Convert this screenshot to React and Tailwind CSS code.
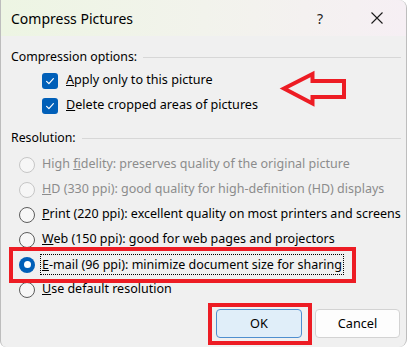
import React from 'react'

// Compress Pictures dialog (Windows 11 look) with red annotation marks

const font = { fontFamily: '"Segoe UI", "Noto Sans", "Liberation Sans", Arial, sans-serif' }

function Check() {
  return (
    <span className="flex h-4 w-4 shrink-0 items-center justify-center rounded-[3px] bg-[#005fb8]">
      <svg width="16" height="16" viewBox="0 0 16 16">
        <path d="M4.6 8.4 L6.9 10.6 L11.4 5.7" fill="none" stroke="#fff" strokeWidth="1.2" strokeLinecap="round" strokeLinejoin="round" />
      </svg>
    </span>
  )
}

function Radio({ state }) {
  if (state === 'on') {
    return (
      <span className="flex h-4 w-4 shrink-0 items-center justify-center rounded-full bg-[#005fb8]">
        <span className="h-[7px] w-[7px] rounded-full bg-white" />
      </span>
    )
  }
  if (state === 'disabled') {
    return <span className="h-4 w-4 shrink-0 rounded-full border border-[#c6c6c6] bg-[#f6f6f6]" />
  }
  return <span className="h-4 w-4 shrink-0 rounded-full border border-[#5c5c5c] bg-[#f7f7f7]" />
}

function Header({ label }) {
  return (
    <div className="flex h-[20px] items-center pl-[10px] pr-[5px]">
      <span className="text-[12.3px] text-black">{label}</span>
      <div className="ml-[6px] h-px flex-1 bg-[#d7d7d7]" />
    </div>
  )
}

const radios = [
  { key: 'High ', u: 'f', rest: 'idelity: preserves quality of the original picture', pre: true, state: 'disabled' },
  { u: 'H', rest: 'D (330 ppi): good quality for high-definition (HD) displays', state: 'disabled' },
  { u: 'P', rest: 'rint (220 ppi): excellent quality on most printers and screens', state: 'off' },
  { u: 'W', rest: 'eb (150 ppi): good for web pages and projectors', state: 'off' },
  { u: 'E', rest: '-mail (96 ppi): minimize document size for sharing', state: 'on' },
  { u: 'U', rest: 'se default resolution', state: 'off' },
]

export default function App() {
  return (
    <div className="h-[347px] w-[409px] overflow-hidden bg-white" style={font}>
      <div className="relative flex h-[347px] w-[407px] flex-col rounded-r-[8px] rounded-bl-[6px] border-l border-r border-[#bdbdbd] bg-[#f0f0f0]">
        {/* title bar */}
        <div className="flex h-[36px] items-center rounded-tr-[8px] bg-linear-to-r from-[#edf5e3] via-[#f2f3ec] to-[#f6eff4]">
          <span className="pl-[10px] text-[14px] text-black">Compress Pictures</span>
          <span className="ml-auto mr-[47px] text-[14px] text-[#222]">?</span>
          <svg width="14" height="14" viewBox="0 0 14 14" className="mr-[22px]">
            <path d="M1.5 1.5 L12.5 12.5 M12.5 1.5 L1.5 12.5" stroke="#1a1a1a" strokeWidth="1.1" />
          </svg>
        </div>

        <div className="pt-[11px]">
          <Header label="Compression options:" />
          <div className="mt-[1px] flex flex-col pl-[41px]">
            <label className="flex h-[25px] items-center gap-[8px] text-[12.6px] text-black">
              <Check />
              <span><u>A</u>pply only to this picture</span>
            </label>
            <label className="flex h-[25px] items-center gap-[8px] text-[12.6px] text-black">
              <Check />
              <span><u>D</u>elete cropped areas of pictures</span>
            </label>
          </div>

          <div className="mt-[10px]">
            <Header label="Resolution:" />
          </div>
          <div className="mt-[4px] flex flex-col pl-[18px]">
            {radios.map((r, i) => (
              <div key={i} className={`flex h-[25px] items-center gap-[7px] whitespace-nowrap text-[12.5px] ${r.state === 'disabled' ? 'text-[#8c8c8c]' : 'text-black'}`}>
                <Radio state={r.state} />
                {r.state === 'on' ? (
                  <span className="-ml-[2px] border border-dotted border-black px-[1px] leading-[19px]"><u>{r.u}</u>{r.rest}</span>
                ) : (
                  <span>{r.pre ? r.key : ''}<u>{r.u}</u>{r.rest}</span>
                )}
              </div>
            ))}
          </div>

          <div className="mt-[7px] flex justify-end gap-[13px] pr-[6px]">
            <button className="h-[29px] w-[86px] rounded-[4px] border border-[#4f8fcf] bg-[#e0eef9] text-[12.7px] text-black">OK</button>
            <button className="h-[29px] w-[85px] rounded-[4px] border border-[#d3d3d3] bg-[#fdfdfd] text-[12.7px] text-black">Cancel</button>
          </div>
        </div>

        {/* red annotations */}
        <svg className="pointer-events-none absolute left-[278px] top-[70px]" width="70" height="38" viewBox="0 0 70 38">
          <path d="M5 18.5 L33.5 4 L33.5 11 L65 11 L65 27 L33.5 27 L33.5 33.5 Z" fill="none" stroke="#ed1c24" strokeWidth="4" strokeLinejoin="miter" />
        </svg>
        <div className="pointer-events-none absolute left-[8px] top-[247px] h-[36px] w-[347px] border-[4px] border-[#ed1c24]" />
        <div className="pointer-events-none absolute left-[207px] top-[303px] h-[42px] w-[104px] border-[4px] border-[#ed1c24]" />
      </div>
    </div>
  )
}
